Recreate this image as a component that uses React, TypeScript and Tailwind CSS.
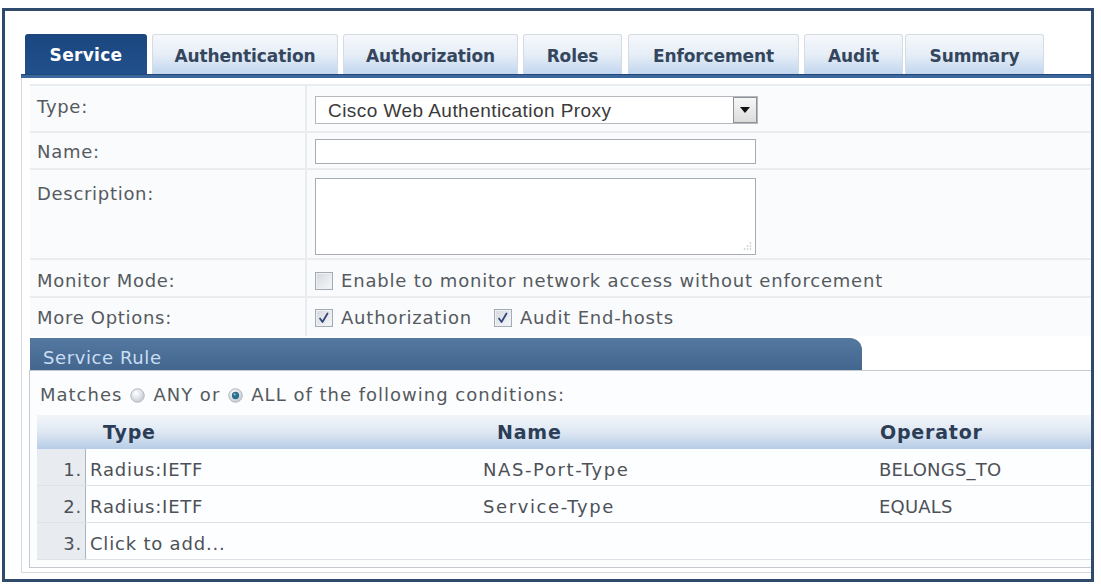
import React from "react";

function Checkbox({ checked }: { checked: boolean }) {
  return (
    <svg width="18" height="18" viewBox="0 0 18 18" className="shrink-0">
      <defs>
        <linearGradient id={checked ? "cbg1" : "cbg0"} x1="0" y1="0" x2="1" y2="1">
          <stop offset="0" stopColor="#d3d8df" />
          <stop offset="1" stopColor="#f7f8fa" />
        </linearGradient>
      </defs>
      <rect x="0.5" y="0.5" width="17" height="17" fill={`url(#${checked ? "cbg1" : "cbg0"})`} stroke="#a3abb6" />
      <rect x="1.5" y="1.5" width="15" height="15" fill="none" stroke="#eef0f3" />
      {checked && <path d="M5 9.5 L7.5 13 L12.5 4.5" fill="none" stroke="#34477a" strokeWidth="1.8" strokeLinecap="round" strokeLinejoin="round" />}
    </svg>
  );
}

function Radio({ checked }: { checked: boolean }) {
  return (
    <svg width="15" height="15" viewBox="0 0 14 14" className="shrink-0">
      <defs>
        <radialGradient id={checked ? "rg1" : "rg0"} cx="0.4" cy="0.35" r="0.7">
          <stop offset="0" stopColor="#ffffff" />
          <stop offset="1" stopColor="#c3c9d1" />
        </radialGradient>
      </defs>
      <circle cx="7" cy="7" r="6.3" fill={`url(#${checked ? "rg1" : "rg0"})`} stroke="#aeb5be" strokeWidth="0.9" />
      {checked && <circle cx="7" cy="7" r="3.4" fill="#2b6f8c" />}
      {checked && <circle cx="6.2" cy="6" r="1" fill="#8fc2d8" />}
    </svg>
  );
}

const tabs: { label: string; cls: string }[] = [
  { label: "Service", cls: "w-[122px]" },
  { label: "Authentication", cls: "w-[186px] ml-[5px]" },
  { label: "Authorization", cls: "w-[175px] ml-[5px]" },
  { label: "Roles", cls: "w-[99px] ml-[5px]" },
  { label: "Enforcement", cls: "w-[171px] ml-[6px]" },
  { label: "Audit", cls: "w-[99px] ml-[5px]" },
  { label: "Summary", cls: "w-[139px] ml-[2px]" },
];

const labelCls = "w-[277px] shrink-0 border-r-2 border-[#eaedf0] pl-[7px] text-[18px] leading-[22px] tracking-[0.7px] text-[#555a60]";
const bodyText = "text-[18px] leading-[22px] tracking-[0.8px] text-[#555a60]";

export default function App() {
  return (
    <div className="w-[1101px] h-[584px] bg-white pt-[8px] pl-[2px] font-['DejaVu_Sans',Verdana,sans-serif] overflow-hidden">
      <div className="w-[1092px] h-[574px] border-[3px] border-[#2f4a6b] bg-white pt-[23px] flex flex-col">
        {/* Tabs */}
        <div className="flex pl-[20px] h-[40px] items-end">
          {tabs.map((t, i) =>
            i === 0 ? (
              <div
                key={t.label}
                className={`${t.cls} h-[40px] rounded-t-[3px] bg-gradient-to-b from-[#1b467f] to-[#22508c] text-white font-bold text-[17px] tracking-[0.3px] flex items-center justify-center pt-[4px]`}
              >
                {t.label}
              </div>
            ) : (
              <div
                key={t.label}
                className={`${t.cls} h-[40px] rounded-t-[3px] border border-b-0 border-[#d3dbe4] bg-gradient-to-b from-[#f6f8fb] via-[#e6eef7] to-[#c2d6ee] text-[#34465d] font-bold text-[17px] tracking-[-0.1px] flex items-center justify-center pt-[4px]`}
              >
                {t.label}
              </div>
            )
          )}
        </div>
        <div className="h-[4px] ml-[16px] bg-[#3c679c] border-t border-[#24477a]" />

        {/* Panel */}
        <div className="ml-[16px] h-[495px] border-l border-b border-[#d5dae0] pl-[8px] pt-[6px] flex flex-col">
          <div className="border-t-2 border-[#eaedf0] bg-[#fafbfc]">
            {/* Type */}
            <div className="flex h-[47px] border-b-2 border-[#eaedf0]">
              <div className={`${labelCls} pt-[10px]`}>Type:</div>
              <div className="pl-[8px] pt-[10px]">
                <div className="w-[443px] h-[28px] border border-[#b5b9be] bg-white flex items-center">
                  <span className="flex-1 pl-[12px] font-['Liberation_Sans',Arial,sans-serif] text-[19px] tracking-[0.45px] text-[#3a3a3a] leading-none pt-[1px]">
                    Cisco Web Authentication Proxy
                  </span>
                  <div className="w-[24px] h-[26px] border border-[#8e9296] bg-gradient-to-b from-[#f7f7f7] to-[#dcdcdc] flex items-center justify-center">
                    <svg width="10" height="6" viewBox="0 0 10 6">
                      <path d="M0 0 H10 L5 6 Z" fill="#111" />
                    </svg>
                  </div>
                </div>
              </div>
            </div>
            {/* Name */}
            <div className="flex h-[37px] border-b-2 border-[#eaedf0]">
              <div className={`${labelCls} pt-[8px]`}>Name:</div>
              <div className="pl-[8px] pt-[6px]">
                <div className="w-[441px] h-[25px] border border-[#a9adb2] bg-white" />
              </div>
            </div>
            {/* Description */}
            <div className="flex h-[90px] border-b-2 border-[#eaedf0]">
              <div className={`${labelCls} pt-[13px]`}>Description:</div>
              <div className="pl-[8px] pt-[8px]">
                <div className="relative w-[441px] h-[77px] border border-[#a9adb2] bg-white">
                  <svg width="10" height="10" viewBox="0 0 10 10" className="absolute right-[3px] bottom-[3px]">
                    <circle cx="8.5" cy="2" r="0.8" fill="#b8bcc1" />
                    <circle cx="5.5" cy="5" r="0.8" fill="#b8bcc1" />
                    <circle cx="8.5" cy="5" r="0.8" fill="#b8bcc1" />
                    <circle cx="2.5" cy="8" r="0.8" fill="#b8bcc1" />
                    <circle cx="5.5" cy="8" r="0.8" fill="#b8bcc1" />
                    <circle cx="8.5" cy="8" r="0.8" fill="#b8bcc1" />
                  </svg>
                </div>
              </div>
            </div>
            {/* Monitor Mode */}
            <div className="flex h-[38px] border-b-2 border-[#eaedf0]">
              <div className={`${labelCls} pt-[10px]`}>Monitor Mode:</div>
              <div className={`pl-[8px] pt-[10px] flex items-center h-[22px] box-content gap-[8px] ${bodyText}`}>
                <Checkbox checked={false} />
                <span>Enable to monitor network access without enforcement</span>
              </div>
            </div>
            {/* More Options */}
            <div className="flex h-[38px]">
              <div className={`${labelCls} pt-[9px]`}>More Options:</div>
              <div className={`pl-[8px] pt-[9px] flex items-center h-[22px] box-content ${bodyText}`}>
                <Checkbox checked={true} />
                <span className="ml-[8px]">Authorization</span>
                <span className="ml-[22px]"><Checkbox checked={true} /></span>
                <span className="ml-[8px]">Audit End-hosts</span>
              </div>
            </div>
          </div>

          {/* Service Rule */}
          <div className="mt-[2px] w-[832px] h-[32px] rounded-tr-[12px] bg-gradient-to-b from-[#5478a0] to-[#43668f] pl-[13px] pt-[9px] text-[18px] leading-[22px] tracking-[0.6px] text-[#c9def3]">
            Service Rule
          </div>
          <div className="h-[198px] border-t border-[#c5cad0] border-l border-b bg-[#fcfdfe] -ml-[1px] pl-[7px]">
            <div className="flex items-center h-[22px] mt-[13px] pl-[3px] text-[18px] leading-[22px] tracking-[1px] text-[#555a60]">
              <span>Matches</span>
              <span className="ml-[8px]"><Radio checked={false} /></span>
              <span className="ml-[8px]">ANY or</span>
              <span className="ml-[8px]"><Radio checked={true} /></span>
              <span className="ml-[8px]">ALL of the following conditions:</span>
            </div>
            <div className="mt-[9px]">
              {/* header */}
              <div className="flex h-[34px] items-center bg-gradient-to-b from-[#f2f6fa] via-[#dfe8f3] to-[#b6cce6] font-bold text-[19px] tracking-[0.8px] text-[#2c3d57]">
                <div className="w-[49px] shrink-0" />
                <div className="w-[393px] shrink-0 pl-[17px]">Type</div>
                <div className="w-[396px] shrink-0 pl-[18px]">Name</div>
                <div className="flex-1 pl-[5px]">Operator</div>
              </div>
              {[
                ["1.", "Radius:IETF", "NAS-Port-Type", "BELONGS_TO"],
                ["2.", "Radius:IETF", "Service-Type", "EQUALS"],
                ["3.", "Click to add...", "", ""],
              ].map((r) => (
                <div key={r[0]} className="flex h-[37px] border-b border-[#dde2e8] text-[18px] tracking-[0.8px] text-[#4d5157]">
                  <div className="w-[49px] shrink-0 bg-[#e8ecf1] border-r border-[#aab4c0] flex items-center justify-end pr-[3px] pt-[4px]">{r[0]}</div>
                  <div className="w-[392px] shrink-0 bg-[#fdfeff] flex items-center pl-[4px] pt-[4px]">{r[1]}</div>
                  <div className="w-[396px] shrink-0 bg-[#fdfeff] flex items-center pl-[5px] pt-[4px] tracking-[1.6px]">{r[2]}</div>
                  <div className="flex-1 bg-[#fdfeff] flex items-center pl-[5px] pt-[4px] tracking-[0.2px]">{r[3]}</div>
                </div>
              ))}
            </div>
          </div>
        </div>
      </div>
    </div>
  );
}
